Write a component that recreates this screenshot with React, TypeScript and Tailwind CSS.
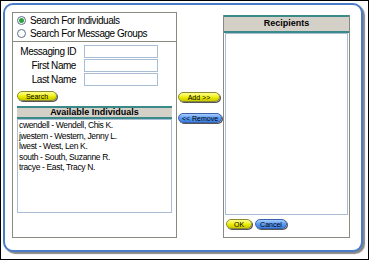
import React from "react";

const font = { fontFamily: '"Liberation Sans", Arial, sans-serif' };

function Pill({ label, color, w }: { label: string; color: "yellow" | "blue"; w: string }) {
  const bg =
    color === "yellow"
      ? "bg-gradient-to-b from-[#ffff80] via-[#f0f000] to-[#c8c800] border-[#8a8a30]"
      : "bg-gradient-to-b from-[#a8ccff] via-[#5b9cf5] to-[#3d7ee0] border-[#3a62a8]";
  return (
    <div
      className={`${w} h-[10px] rounded-full border ${bg} shadow-[1px_1px_0_#555] flex items-center justify-center text-[7px] leading-none text-black`}
    >
      {label}
    </div>
  );
}

function Radio({ checked }: { checked?: boolean }) {
  return (
    <span className="w-[9px] h-[9px] rounded-full border border-[#5a6e8a] bg-white flex items-center justify-center shrink-0">
      {checked && <span className="w-[5px] h-[5px] rounded-full bg-[#2ea13a]" />}
    </span>
  );
}

function Header({ title, h }: { title: string; h: string }) {
  return (
    <div
      className={`${h} bg-[#d4d0c8] border-t-2 border-b-2 border-[#3a8a8a] flex items-center justify-center font-bold text-[9px] text-black`}
    >
      {title}
    </div>
  );
}

export default function App() {
  const people = [
    "cwendell - Wendell, Chis K.",
    "jwestern - Western, Jenny L.",
    "lwest - West, Len K.",
    "south - South, Suzanne R.",
    "tracye - East, Tracy N.",
  ];

  return (
    <div className="w-[369px] h-[260px] bg-white border border-black overflow-hidden" style={font}>
      <div className="ml-[2px] mt-[2px] w-[360px] h-[249px] rounded-[10px] border-2 border-[#4a7cc8] shadow-[2px_2px_1px_#888] bg-white flex pl-[7px] pt-[7px]">
        {/* left panel */}
        <div className="w-[165px] h-[226px] border border-[#8a8a80] flex flex-col">
          <div className="flex flex-col pl-[4px] pt-[1px] text-[10px] tracking-[-0.45px] text-black">
            <div className="flex items-center gap-[4px] h-[13px]">
              <Radio checked />
              <span>Search For Individuals</span>
            </div>
            <div className="flex items-center gap-[4px] h-[13px]">
              <Radio />
              <span>Search For Message Groups</span>
            </div>
          </div>
          <div className="border-t border-[#8a8a80] mt-[1px]" />
          <div className="grid grid-cols-[63px_74px] gap-x-[8px] gap-y-[1px] mt-[3px] text-[10px] tracking-[-0.45px]">
            {["Messaging ID", "First Name", "Last Name"].map((l) => (
              <React.Fragment key={l}>
                <span className="text-right leading-[13px] self-center">{l}</span>
                <div className="h-[13px] border border-[#a9bdd4] bg-white" />
              </React.Fragment>
            ))}
          </div>
          <div className="pl-[4px] mt-[5px]">
            <Pill label="Search" color="yellow" w="w-[40px]" />
          </div>
          <div className="mx-[4px] mt-[5px]">
            <Header title="Available Individuals" h="h-[13px]" />
            <div className="h-[94px] border border-[#a9bdd4] bg-white pl-[1px] text-[8.5px] leading-[10.5px] tracking-[-0.35px]">
              {people.map((p) => (
                <div key={p}>{p}</div>
              ))}
            </div>
          </div>
        </div>

        {/* middle buttons */}
        <div className="w-[46px] flex flex-col items-start pl-[1px] pt-[80px] gap-[11px]">
          <Pill label="Add >>" color="yellow" w="w-[42px]" />
          <Pill label="<< Remove" color="blue" w="w-[44px]" />
        </div>

        {/* right panel */}
        <div className="w-[127px] h-[223px] mt-[3px] border-l border-r border-b border-[#8a8a80] flex flex-col">
          <Header title="Recipients" h="h-[18px]" />
          <div className="mx-[1px] h-[182px] border border-[#a9bdd4] bg-white" />
          <div className="flex gap-[3px] pl-[2px] mt-[4px]">
            <Pill label="OK" color="yellow" w="w-[26px]" />
            <Pill label="Cancel" color="blue" w="w-[32px]" />
          </div>
        </div>
      </div>
    </div>
  );
}
